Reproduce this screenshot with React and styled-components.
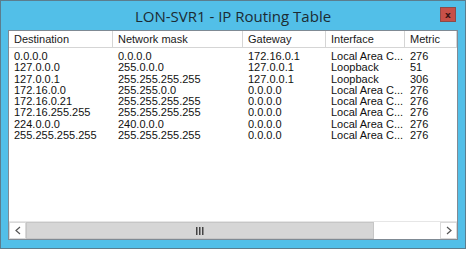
import React from 'react';
import styled, { createGlobalStyle } from 'styled-components';

const GlobalStyle = createGlobalStyle`
  html, body {
    margin: 0;
    padding: 0;
    background: #ffffff;
  }
`;

const columns = [
  { key: 'dest', text: 'Destination', width: 104 },
  { key: 'mask', text: 'Network mask', width: 130 },
  { key: 'gw', text: 'Gateway', width: 83 },
  { key: 'iface', text: 'Interface', width: 79 },
  { key: 'metric', text: 'Metric', width: 52 },
];

const routes = [
  { dest: '0.0.0.0', mask: '0.0.0.0', gw: '172.16.0.1', iface: 'Local Area C...', metric: '276' },
  { dest: '127.0.0.0', mask: '255.0.0.0', gw: '127.0.0.1', iface: 'Loopback', metric: '51' },
  { dest: '127.0.0.1', mask: '255.255.255.255', gw: '127.0.0.1', iface: 'Loopback', metric: '306' },
  { dest: '172.16.0.0', mask: '255.255.0.0', gw: '0.0.0.0', iface: 'Local Area C...', metric: '276' },
  { dest: '172.16.0.21', mask: '255.255.255.255', gw: '0.0.0.0', iface: 'Local Area C...', metric: '276' },
  { dest: '172.16.255.255', mask: '255.255.255.255', gw: '0.0.0.0', iface: 'Local Area C...', metric: '276' },
  { dest: '224.0.0.0', mask: '240.0.0.0', gw: '0.0.0.0', iface: 'Local Area C...', metric: '276' },
  { dest: '255.255.255.255', mask: '255.255.255.255', gw: '0.0.0.0', iface: 'Local Area C...', metric: '276' },
];

const Window = styled.div`
  width: 466px;
  height: 249px;
  box-sizing: border-box;
  background: #52bfe8;
  border: 1px solid #5b7d8e;
  display: flex;
  flex-direction: column;
`;

const TitleBar = styled.div`
  height: 29px;
  display: flex;
  align-items: center;
  justify-content: center;
  position: relative;
  font-family: 'Open Sans', 'Noto Sans', sans-serif;
  font-size: 15px;
  color: #1c2b33;
`;

const CloseButton = styled.div`
  position: absolute;
  right: 9px;
  top: 6px;
  width: 16px;
  height: 15px;
  box-sizing: border-box;
  background: #c75048;
  border: 1px solid #8e4a48;
  color: #3a1414;
  font-family: 'DejaVu Sans', sans-serif;
  font-size: 9px;
  font-weight: bold;
  display: flex;
  align-items: center;
  justify-content: center;
`;

const Body = styled.div`
  flex: 1;
  padding: 0 7px 8px 7px;
  display: flex;
`;

const ListView = styled.div`
  flex: 1;
  background: #ffffff;
  border: 1px solid #7f8a94;
  display: flex;
  flex-direction: column;
  font-family: 'Liberation Sans', Arial, sans-serif;
  font-size: 11px;
  color: #111111;
  overflow: hidden;
`;

const HeaderRow = styled.div`
  display: flex;
  height: 16px;
  border-bottom: 1px solid #d5d5d5;
`;

const HeaderCell = styled.div`
  width: ${p => p.$width}px;
  flex: none;
  box-sizing: border-box;
  padding: 2px 0 0 5px;
  border-right: 1px solid #d5d5d5;
  color: #1a1a1a;
  white-space: nowrap;
  overflow: hidden;
`;

const Rows = styled.div`
  flex: 1;
  padding-top: 3px;
`;

const Row = styled.div`
  display: flex;
  height: 11.3px;
  line-height: 11px;
`;

const Cell = styled.div`
  width: ${p => p.$width}px;
  flex: none;
  box-sizing: border-box;
  padding-left: 5px;
  white-space: nowrap;
  overflow: hidden;
`;

const ScrollBar = styled.div`
  height: 17px;
  display: flex;
  border-top: 1px solid #e6e6e6;
`;

const ArrowButton = styled.div`
  width: 17px;
  flex: none;
  display: flex;
  align-items: center;
  justify-content: center;
  background: #ffffff;
  border: 1px solid #d9d9d9;
  box-sizing: border-box;
`;

const Track = styled.div`
  flex: 1;
  display: flex;
  background: #ffffff;
`;

const Thumb = styled.div`
  width: 348px;
  background: #d6d6d6;
  border: 1px solid #c6c6c6;
  box-sizing: border-box;
  display: flex;
  align-items: center;
  justify-content: center;
`;

const Grip = () => (
  <svg width="8" height="8" viewBox="0 0 8 8">
    <rect x="0" y="0" width="1.5" height="8" fill="#444" />
    <rect x="3" y="0" width="1.5" height="8" fill="#444" />
    <rect x="6" y="0" width="1.5" height="8" fill="#444" />
  </svg>
);

const Chevron = ({ dir }) => (
  <svg width="6" height="9" viewBox="0 0 6 9">
    <polyline
      points={dir === 'left' ? '5,1 1,4.5 5,8' : '1,1 5,4.5 1,8'}
      fill="none"
      stroke="#555"
      strokeWidth="1.2"
    />
  </svg>
);

export default () => {
  return (
    <>
      <GlobalStyle />
      <Window>
        <TitleBar>
          LON-SVR1 - IP Routing Table
          <CloseButton>x</CloseButton>
        </TitleBar>
        <Body>
          <ListView>
            <HeaderRow>
              {columns.map(({ key, text, width }) => (
                <HeaderCell key={`heading-${key}`} $width={width}>{text}</HeaderCell>
              ))}
            </HeaderRow>
            <Rows>
              {routes.map((route, i) => (
                <Row key={`route-${i}`}>
                  {columns.map(({ key, width }) => (
                    <Cell key={`route-${i}-${key}`} $width={width}>{route[key]}</Cell>
                  ))}
                </Row>
              ))}
            </Rows>
            <ScrollBar>
              <ArrowButton><Chevron dir="left" /></ArrowButton>
              <Track>
                <Thumb><Grip /></Thumb>
              </Track>
              <ArrowButton><Chevron dir="right" /></ArrowButton>
            </ScrollBar>
          </ListView>
        </Body>
      </Window>
    </>
  );
};
